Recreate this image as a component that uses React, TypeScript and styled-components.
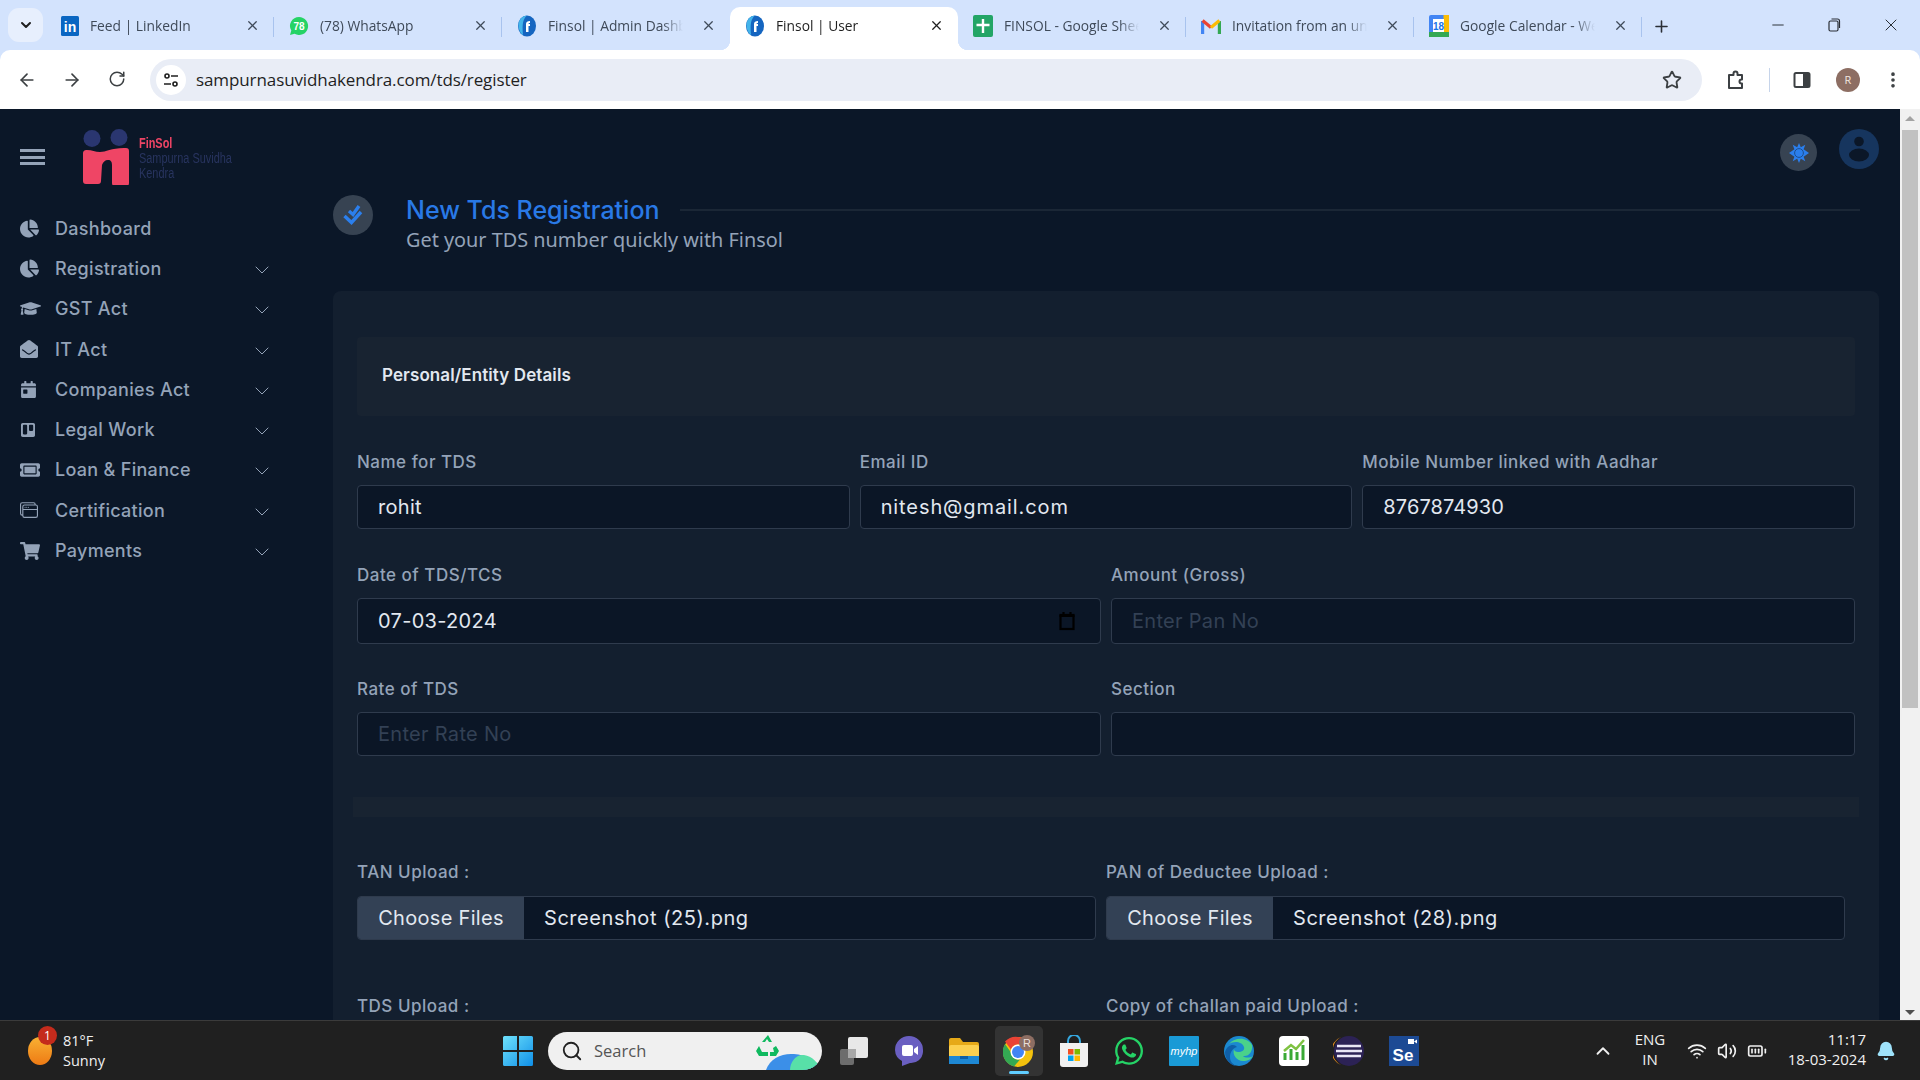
import * as React from 'react';
import styled, { createGlobalStyle } from 'styled-components';
import { ArrowLeft, ArrowRight, RotateCw, Star, X, Plus, Minus, ChevronDown, ChevronUp, MoreVertical, Search, Volume2, Wifi, BatteryFull, Bell } from 'lucide-react';
import { FaChartPie, FaGraduationCap, FaEnvelopeOpen, FaCalendarDay, FaTrello, FaTicketAlt, FaShoppingCart, FaWhatsapp } from 'react-icons/fa';
import { BsWindowStack } from 'react-icons/bs';

const uiFont = '"Inter", "Liberation Sans", sans-serif';
const chromeFont = '"Open Sans", "Noto Sans", sans-serif';

const GlobalStyle = createGlobalStyle`
  * { box-sizing: border-box; }
  html, body { margin: 0; height: 100%; overflow: hidden; }
  body { font-family: ${uiFont}; background: #0b1728; }
`;

const Screen = styled.div`
  width: 1920px;
  height: 1080px;
  display: flex;
  flex-direction: column;
  overflow: hidden;
  background: #d3e3fd;
`;

/* browser chrome */
const TabStrip = styled.div`
  height: 50px;
  flex: none;
  display: flex;
  align-items: flex-end;
  background: #d3e3fd;
  padding-left: 8px;
  font-family: ${chromeFont};
`;

const TabMenu = styled.div`
  width: 35px;
  height: 34px;
  margin: 0 3px 8px 0;
  border-radius: 11px;
  background: #e7effd;
  display: flex;
  align-items: center;
  justify-content: center;
  color: #1f1f1f;
`;

const Tab = styled.div<{ $active?: boolean; $sep?: boolean }>`
  position: relative;
  width: 228px;
  height: 43px;
  display: flex;
  align-items: center;
  padding: 0 14.500px 6px 15px;
  gap: 11px;
  border-radius: 10px 10px 0 0;
  background: ${p => (p.$active ? '#fff' : 'transparent')};
  color: ${p => (p.$active ? '#1f1f1f' : '#3f4a59')};

  &::after {
    content: '';
    display: ${p => (p.$sep ? 'block' : 'none')};
    position: absolute;
    right: 0;
    top: 10px;
    height: 20px;
    width: 1px;
    background: #a8c3ee;
  }

  ${p => p.$active && `
    &::before, &::after {
      content: '';
      display: block;
      position: absolute;
      top: auto;
      bottom: 0;
      width: 10px;
      height: 10px;
    }
    &::before {
      left: -10px;
      background: radial-gradient(circle at 0 0, transparent 10px, #fff 10.5px);
    }
    &::after {
      right: -10px;
      background: radial-gradient(circle at 100% 0, transparent 10px, #fff 10.5px);
    }
  `}
`;

const TabTitle = styled.span`
  flex: 1;
  margin-right: 7px;
  font-size: 13.8px;
  white-space: nowrap;
  overflow: hidden;
  -webkit-mask-image: linear-gradient(90deg, #000 85%, transparent);
  mask-image: linear-gradient(90deg, #000 85%, transparent);
`;

const NewTab = styled.div`
  width: 30px;
  height: 42px;
  margin-left: 4px;
  padding-bottom: 6px;
  display: flex;
  align-items: center;
  justify-content: center;
  color: #2a2f36;
`;

const WindowButtons = styled.div`
  margin-left: auto;
  height: 50px;
  display: flex;
  align-items: center;
  gap: 38px;
  padding: 0 19px 0 0;
  color: #2a2f36;
`;

const RestoreIcon = () => (
  <svg width="18" height="18" viewBox="0 0 18 18" fill="none" stroke="#2a2f36" strokeWidth="1.2">
    <rect x="4" y="5" width="9" height="10" rx="1.5" />
    <path d="M6.5 3h6a2 2 0 0 1 2 2v7" />
  </svg>
);

const Toolbar = styled.div`
  height: 59px;
  flex: none;
  display: flex;
  align-items: center;
  background: #fff;
  padding: 0 17px;
  color: #3c4043;
  border-radius: 10px 10px 0 0;
`;

const NavButtons = styled.div`
  display: flex;
  gap: 25px;
  width: 133px;
`;

const ReloadWrap = styled.span`
  margin-left: 1px;
  display: flex;
`;

const Omnibox = styled.div`
  width: 1552px;
  height: 42px;
  display: flex;
  align-items: center;
  border-radius: 21px;
  background: #e9edf6;
  padding: 0 20px 0 6px;
  font-family: ${chromeFont};
`;

const SiteInfo = styled.div`
  width: 30px;
  height: 30px;
  border-radius: 50%;
  background: #fff;
  display: flex;
  align-items: center;
  justify-content: center;
  margin-right: 10px;
`;

const Url = styled.span`
  flex: 1;
  font-size: 17px;
  letter-spacing: -0.1px;
  color: #1f1f1f;
`;

const ToolIcons = styled.div`
  flex: 1;
  display: flex;
  align-items: center;
  padding-left: 23px;
`;

const ToolSep = styled.div`
  width: 1px;
  height: 24px;
  background: #c6d4ea;
  margin: 0 22px 0 22px;
`;

const Avatar = styled.div`
  width: 24px;
  height: 24px;
  border-radius: 50%;
  background: #8d6e63;
  color: #f2e6e0;
  font-size: 11px;
  display: flex;
  align-items: center;
  justify-content: center;
  font-family: ${chromeFont};
  margin: 0 23px 0 24px;
`;

const SidePanelIcon = () => (
  <svg width="20" height="20" viewBox="0 0 20 20">
    <rect x="2.5" y="3" width="15" height="14" rx="1.5" fill="none" stroke="#3c4043" strokeWidth="2" />
    <rect x="11" y="3" width="6.5" height="14" fill="#3c4043" />
  </svg>
);

const ExtensionIcon = () => (
  <svg width="22" height="22" viewBox="0 0 22 22" fill="none" stroke="#3c4043" strokeWidth="2" strokeLinejoin="round">
    <path d="M4 6h4.500V4.500a2 2 0 0 1 4 0V6H17v4.500h-.5a2 2 0 0 0 0 4h.5V19H4z" />
  </svg>
);

/* page */
const Page = styled.div`
  flex: 1;
  min-height: 0;
  display: flex;
  background: #0b1728;
`;

const Sidebar = styled.aside`
  width: 300px;
  flex: none;
  padding: 20px 0 0 20px;
`;

const Brand = styled.div`
  height: 56px;
  display: flex;
  align-items: center;
  margin-bottom: 23px;
`;

const Burger = styled.div`
  width: 25px;
  height: 16px;
  margin-right: 38px;
  border-top: 3px solid #94a3b8;
  border-bottom: 3px solid #94a3b8;
  display: flex;
  align-items: center;

  &::before {
    content: '';
    display: block;
    width: 100%;
    height: 3px;
    background: #94a3b8;
  }
`;

const BrandText = styled.div`
  margin: 3px 0 0 10px;
  font-family: "Liberation Sans", sans-serif;
  font-size: 14px;
  line-height: 15px;
  color: #28345f;
  transform: scaleX(0.78);
  transform-origin: left;
  white-space: nowrap;

  b {
    display: block;
    color: #ef4565;
  }
`;

const NavItem = styled.div`
  height: 40.3px;
  display: flex;
  align-items: center;
  color: #94a3b8;
  font-size: 18px;
  font-weight: 500;
  letter-spacing: 0.3px;
`;

const NavIcon = styled.span`
  width: 35px;
  flex: none;
  display: flex;
  align-items: center;
`;

const NavLabel = styled.span`
  width: 195px;
`;

const NavChevron = styled(ChevronDown)`
  margin-top: 3px;
`;

const Main = styled.main`
  flex: 1;
  min-width: 0;
  padding: 20px 21px 0 33px;
  overflow: hidden;
`;

const TopActions = styled.div`
  height: 40px;
  display: flex;
  justify-content: flex-end;
  gap: 22px;
`;

const GearButton = styled.div`
  width: 37px;
  height: 37px;
  margin-top: 5px;
  border-radius: 50%;
  background: #374352;
  display: flex;
  align-items: center;
  justify-content: center;
`;

const UserButton = styled.div`
  width: 40px;
  height: 40px;
  border-radius: 50%;
  background: #16355e;
  display: flex;
  align-items: center;
  justify-content: center;
`;

const Heading = styled.div`
  display: flex;
  margin-top: 26px;
  gap: 33px;
  padding-right: 19px;
`;

const HeadingBadge = styled.div`
  width: 40px;
  height: 40px;
  flex: none;
  border-radius: 50%;
  background: #374352;
  display: flex;
  align-items: center;
  justify-content: center;
`;

const HeadingText = styled.div`
  flex: 1;
`;

const TitleRow = styled.div`
  height: 28px;
  padding-top: 1px;
  display: flex;
  align-items: center;
  gap: 20px;
`;

const Title = styled.h1`
  margin: 0;
  font-size: 25px;
  font-weight: 500;
  color: #2979e6;
  white-space: nowrap;
`;

const TitleLine = styled.div`
  flex: 1;
  height: 2px;
  background: #1b2736;
`;

const Subtitle = styled.div`
  margin-top: 2px;
  line-height: 30px;
  font-family: "Noto Sans", sans-serif;
  font-size: 19.85px;
  color: #94a3b8;
`;

const Card = styled.section`
  margin-top: 36px;
  padding: 46px 24px 40px;
  background: #131f2f;
  border-radius: 8px;
`;

const SectionBar = styled.div`
  height: 79px;
  padding: 0 0 3px 25px;
  display: flex;
  align-items: center;
  background: #182331;
  color: #e2e8f0;
  font-size: 17px;
  font-weight: 600;
  letter-spacing: 0.1px;
  border-radius: 4px;
`;

const Row = styled.div<{ $cols: number; $top: number }>`
  display: grid;
  grid-template-columns: repeat(${p => p.$cols}, 1fr);
  column-gap: 10px;
  margin-top: ${p => p.$top}px;
`;

const Field = styled.div``;

const Label = styled.label<{ $gap?: number }>`
  display: block;
  height: 22px;
  line-height: 22px;
  margin-bottom: ${p => p.$gap ?? 12}px;
  color: #94a3b8;
  font-size: 17px;
  font-weight: 500;
  letter-spacing: 0.5px;
`;

const Input = styled.input<{ $h: number; $track?: number }>`
  display: block;
  width: 100%;
  height: ${p => p.$h}px;
  padding: 0 20px;
  background: #0b1626;
  border: 1px solid #2f3b4d;
  border-radius: 4px;
  color: #e2e8f0;
  font-family: ${uiFont};
  font-size: 20px;
  letter-spacing: ${p => p.$track ?? 0.3}px;
  outline: none;

  &::placeholder {
    color: #334155;
  }
`;

const DateBox = styled.div`
  height: 46px;
  padding: 0 24px 0 20px;
  display: flex;
  align-items: center;
  justify-content: space-between;
  background: #0b1626;
  border: 1px solid #2f3b4d;
  border-radius: 4px;
  color: #e2e8f0;
  font-size: 20px;
  letter-spacing: 0.3px;
`;

const Divider = styled.div`
  height: 20px;
  margin: 41px -4px 0;
  background: #182331;
`;

const UploadRow = styled.div<{ $top: number }>`
  display: grid;
  grid-template-columns: 739px 739px;
  column-gap: 10px;
  margin-top: ${p => p.$top}px;
`;

const FileBox = styled.div`
  height: 44px;
  display: flex;
  align-items: center;
  background: #0b1626;
  border: 1px solid #2f3b4d;
  border-radius: 4px;
  overflow: hidden;
  color: #e2e8f0;
  font-size: 20px;
  letter-spacing: 0.55px;
`;

const FileButton = styled.div`
  width: 166px;
  height: 100%;
  flex: none;
  display: flex;
  align-items: center;
  justify-content: center;
  background: #334155;
  margin-right: 20px;
  letter-spacing: 0.3px;
`;

const Scrollbar = styled.div`
  width: 20px;
  flex: none;
  position: relative;
  background: #f1f1f1;
`;

const ScrollThumb = styled.div`
  margin: 21px 2px 0;
  height: 578px;
  background: #c1c1c1;
`;

const ScrollArrow = styled.div<{ $down?: boolean }>`
  position: absolute;
  left: 5px;
  ${p => (p.$down ? 'bottom: 5px;' : 'top: 7px;')}
  width: 0;
  height: 0;
  border-left: 5px solid transparent;
  border-right: 5px solid transparent;
  ${p => (p.$down ? 'border-top: 5px solid #505050;' : 'border-bottom: 5px solid #a3a3a3;')}
`;

/* taskbar */
const Taskbar = styled.footer`
  height: 60px;
  flex: none;
  position: relative;
  display: flex;
  align-items: center;
  background: #202020;
  border-top: 1px solid #3b3b3b;
  color: #f0f0f0;
  font-family: ${chromeFont};
`;

const Weather = styled.div`
  width: 503px;
  flex: none;
  display: flex;
  align-items: center;
  padding-left: 28px;
  gap: 11px;
  font-size: 14.5px;
  line-height: 20px;
`;

const SunBlob = styled.div`
  position: relative;
  width: 24px;
  height: 28px;
  border-radius: 50%;
  background: linear-gradient(180deg, #f8b133, #ee7a14);
`;

const Badge = styled.span`
  position: absolute;
  left: 10px;
  top: -11px;
  width: 19px;
  height: 19px;
  border-radius: 50%;
  background: #c42b1c;
  color: #fff;
  font-size: 12px;
  line-height: 19px;
  text-align: center;
`;

const SearchPill = styled.div`
  width: 274px;
  height: 38px;
  margin: 0 4px 0 15px;
  position: relative;
  overflow: hidden;
  display: flex;
  align-items: center;
  gap: 11px;
  padding-left: 13px;
  border-radius: 19px;
  background: #f0f0f0;
  color: #555;
  font-size: 16.5px;
`;

const PillArt = styled.svg`
  position: absolute;
  right: 0;
  top: 0;
`;

const Dock = styled.div`
  display: flex;
  align-items: center;
`;

const DockSlot = styled.div<{ $active?: boolean }>`
  width: 48px;
  height: 50px;
  margin: 0 3.500px;
  display: flex;
  align-items: center;
  justify-content: center;
  position: relative;
  border-radius: 5px;
  background: ${p => (p.$active ? '#333' : 'transparent')};

  &::after {
    content: '';
    display: ${p => (p.$active ? 'block' : 'none')};
    position: absolute;
    bottom: 2px;
    width: 20px;
    height: 3px;
    border-radius: 2px;
    background: #60cdff;
  }
`;

const Tray = styled.div`
  margin-left: auto;
  display: flex;
  align-items: center;
  padding-right: 24px;
`;

const Lang = styled.div`
  width: 38px;
  margin: 0 18px 4px 17px;
  text-align: center;
  font-size: 15px;
  line-height: 20px;
`;

const TrayIcons = styled.div`
  display: flex;
  align-items: center;
  gap: 10px;
`;

const Clock = styled.div`
  width: 82px;
  margin: 0 10px 4px 17px;
  text-align: right;
  font-size: 15px;
  line-height: 20px;
  white-space: nowrap;
`;

/* favicons and other small drawings */
const LinkedInIcon = () => (
  <svg width="18" height="20" viewBox="0 0 18 20">
    <rect width="18" height="20" y="0" rx="1.5" fill="#0a66c2" />
    <text x="9" y="15.5" textAnchor="middle" fontFamily="Liberation Sans" fontWeight="700" fontSize="14" fill="#fff">in</text>
  </svg>
);

const WhatsAppFav = () => (
  <svg width="20" height="20" viewBox="0 0 20 20">
    <path d="M10 1a9 9 0 0 0-7.7 13.6L1 19l4.6-1.2A9 9 0 1 0 10 1z" fill="#25d366" />
    <text x="10" y="13.5" textAnchor="middle" fontFamily="Liberation Sans" fontWeight="700" fontSize="10" fill="#fff">78</text>
  </svg>
);

const FinsolFav = () => (
  <svg width="20" height="22" viewBox="0 0 20 22">
    <ellipse cx="10" cy="11" rx="9" ry="10.5" fill="#1565c0" />
    <path d="M2 14C0 7 4 1 10 .6 6 4 5 9 6 20 4 19 3 17 2 14z" fill="#43b4ea" />
    <path d="M9 17V9c0-2 1.500-3 4-3v2c-1 0-1.500.3-1.500 1H13v2h-1.500v6z" fill="#fff" />
  </svg>
);

const SheetsFav = () => (
  <svg width="20" height="22" viewBox="0 0 20 22">
    <rect width="20" height="22" rx="2" fill="#23a566" />
    <path d="M10 4v14M3.500 10h13" stroke="#fff" strokeWidth="2.4" />
  </svg>
);

const GmailFav = () => (
  <svg width="20" height="16" viewBox="0 0 20 16" fill="none" strokeWidth="3.200">
    <path d="M1.600 16V3" stroke="#4285f4" />
    <path d="M18.400 16V3" stroke="#34a853" />
    <path d="M1.600 2.500 10 9.500" stroke="#ea4335" />
    <path d="M10 9.500 18.400 2.500" stroke="#fbbc04" />
  </svg>
);

const CalendarFav = () => (
  <svg width="20" height="22" viewBox="0 0 20 22">
    <rect width="20" height="22" rx="2" fill="#4285f4" />
    <rect x="14.500" width="5.500" height="22" fill="#fbbc04" />
    <rect y="17" width="20" height="5" fill="#34a853" />
    <rect x="4" y="4" width="11" height="13" fill="#fff" />
    <text x="9.500" y="15" textAnchor="middle" fontFamily="Liberation Sans" fontWeight="700" fontSize="10" fill="#1a73e8">18</text>
  </svg>
);

const tabs = [
  { title: 'Feed | LinkedIn', icon: <LinkedInIcon />, sep: true },
  { title: '(78) WhatsApp', icon: <WhatsAppFav />, sep: true },
  { title: 'Finsol | Admin Dashboard', icon: <FinsolFav /> },
  { title: 'Finsol | User', icon: <FinsolFav />, active: true },
  { title: 'FINSOL - Google Sheets', icon: <SheetsFav />, sep: true },
  { title: 'Invitation from an unknown', icon: <GmailFav />, sep: true },
  { title: 'Google Calendar - Week', icon: <CalendarFav />, sep: true },
];

const navItems = [
  { label: 'Dashboard', icon: <FaChartPie size={19} />, chevron: false },
  { label: 'Registration', icon: <FaChartPie size={19} />, chevron: true },
  { label: 'GST Act', icon: <FaGraduationCap size={21} />, chevron: true },
  { label: 'IT Act', icon: <FaEnvelopeOpen size={18} />, chevron: true },
  { label: 'Companies Act', icon: <FaCalendarDay size={17} />, chevron: true },
  { label: 'Legal Work', icon: <FaTrello size={16} />, chevron: true },
  { label: 'Loan & Finance', icon: <FaTicketAlt size={20} />, chevron: true },
  { label: 'Certification', icon: <BsWindowStack size={18} />, chevron: true },
  { label: 'Payments', icon: <FaShoppingCart size={20} />, chevron: true },
];

const BrandLogo = () => (
  <svg width="46" height="56" viewBox="0 0 46 56">
    <circle cx="9" cy="9.500" r="8.500" fill="#2a3670" />
    <circle cx="36" cy="8.500" r="8.500" fill="#2a3670" />
    <path d="M0 25c0-3 1-4 4-4 5 0 8 2 13 2 6 0 11-4 24-4h2c2 0 3 1 3 3v32c0 2-1 3-3 3H32c-2 0-3-1-3-3V36c0-3-1-5-4-5s-5 2-6 5l-1 16c0 2-1 3-3 3H3c-2 0-3-1-3-3z" fill="#ef4565" />
  </svg>
);

const SunIcon = () => (
  <svg width="20" height="20" viewBox="0 0 20 20">
    <path d="M10 0l1.800 4.200 4.500-2.500-1.700 4.500L20 10l-5.400 3.800 1.700 4.500-4.500-2.500L10 20l-1.800-4.200-4.500 2.500 1.700-4.500L0 10l5.400-3.800-1.700-4.500 4.500 2.500z" fill="#2b7fed" />
    <circle cx="10" cy="10" r="4.400" fill="#2b7fed" stroke="#1c4f92" strokeWidth="1" />
  </svg>
);

const UserIcon = () => (
  <svg width="40" height="40" viewBox="0 0 40 40" fill="#0b1728">
    <circle cx="20" cy="12.500" r="4.800" />
    <ellipse cx="20" cy="26" rx="10" ry="6.500" />
  </svg>
);

const DoubleCheck = () => (
  <svg width="20" height="22" viewBox="0 0 20 22" fill="none" stroke="#2b7fed" strokeWidth="3.400">
    <path d="M6 7l4 3.500L16 2" />
    <path d="M1.500 12l7 6.500L18 8" />
  </svg>
);

const DateIcon = () => (
  <svg width="18" height="20" viewBox="0 0 18 20" fill="none" stroke="#000" strokeWidth="2.200">
    <rect x="2.500" y="4" width="13" height="14" />
    <path d="M1.500 5h15M5.500 1v3M12.500 1v3" />
  </svg>
);

const WindowsLogo = () => (
  <svg width="30" height="30" viewBox="0 0 30 30">
    <defs>
      <linearGradient id="winGrad" x1="0" y1="0" x2="1" y2="1">
        <stop offset="0" stopColor="#6fe2fb" />
        <stop offset="1" stopColor="#0f8fe8" />
      </linearGradient>
    </defs>
    <path d="M0 1.500A1.500 1.500 0 0 1 1.500 0H14v14H0zM16 0h12.500A1.500 1.500 0 0 1 30 1.500V14H16zM0 16h14v14H1.500A1.500 1.500 0 0 1 0 28.500zM16 16h14v12.500a1.500 1.500 0 0 1-1.500 1.500H16z" fill="url(#winGrad)" />
  </svg>
);

const dockIcons = [
  <svg width="30" height="30" viewBox="0 0 30 30"><rect x="9" y="1" width="20" height="21" rx="2" fill="#e8e8e8" /><rect x="1" y="13" width="14" height="16" rx="2" fill="#6d6d6d" /><rect x="9" y="13" width="8" height="9" fill="#a9a9a9" /></svg>,
  <svg width="30" height="32" viewBox="0 0 30 32"><path d="M15 1a14 14 0 0 1 14 14v2a12 12 0 0 1-13 11l-8 3v-5A13 13 0 0 1 1 15 14 14 0 0 1 15 1z" fill="#6a5fc1" /><rect x="8" y="10" width="11" height="11" rx="2" fill="#fff" /><path d="M20 14l4-3v9l-4-3z" fill="#fff" /></svg>,
  <svg width="32" height="28" viewBox="0 0 32 28"><path d="M1 3a2 2 0 0 1 2-2h9l3 4h14a2 2 0 0 1 2 2v4H1z" fill="#e6a918" /><rect x="1" y="8" width="30" height="19" rx="2" fill="#fcd04f" /><rect x="1" y="19" width="30" height="8" fill="#1e88d4" /><rect x="12" y="19" width="8" height="3" fill="#0f5fa5" /></svg>,
  <svg width="32" height="32" viewBox="0 0 32 32"><circle cx="15" cy="17" r="15" fill="#f4c20d" /><path d="M15 2a15 15 0 0 1 13 7.500H15a7.500 7.500 0 0 0-7 5L2 6.500A15 15 0 0 1 15 2z" fill="#ea4335" /><path d="M2 9a15 15 0 0 0 9 22.500l6-7a7.500 7.500 0 0 1-9-7z" fill="#34a853" /><circle cx="15" cy="17" r="7.500" fill="#fff" /><circle cx="15" cy="17" r="6" fill="#4285f4" /><circle cx="24" cy="8" r="8" fill="#8d6e63" /><text x="24" y="12" textAnchor="middle" fontFamily="Liberation Sans" fontSize="11" fill="#eadfd9">R</text></svg>,
  <svg width="30" height="32" viewBox="0 0 30 32"><path d="M9 9V6a6 6 0 0 1 12 0v3" fill="none" stroke="#35a8e0" strokeWidth="2" /><path d="M1 8h28v21a3 3 0 0 1-3 3H4a3 3 0 0 1-3-3z" fill="#f1f1f1" /><rect x="9" y="14" width="5.500" height="5.500" fill="#f25022" /><rect x="15.500" y="14" width="5.500" height="5.500" fill="#7fba00" /><rect x="9" y="20.500" width="5.500" height="5.500" fill="#00a4ef" /><rect x="15.500" y="20.500" width="5.500" height="5.500" fill="#ffb900" /></svg>,
  <FaWhatsapp size={32} color="#25d366" />,
  <svg width="30" height="30" viewBox="0 0 30 30"><rect width="30" height="30" rx="1" fill="#1a9ad6" /><text x="15" y="19" textAnchor="middle" fontFamily="Liberation Sans" fontStyle="italic" fontSize="11" fill="#fff">myhp</text></svg>,
  <svg width="30" height="30" viewBox="0 0 30 30"><circle cx="15" cy="15" r="15" fill="#1b88d0" /><path d="M28 9C24 2 12 0 5 8c4-3 13-3 15 3 1 3-2 5-6 5-2 0-4-1-4-3-2 6 3 12 9 12 5 0 8-2 10-5-3 2-8 2-10 0 6 1 10-5 9-11z" fill="#4ad28a" /><path d="M13 11c-4 1-7 5-7 10s3 7 6 9c-6-1-11-7-11-14C3 9 10 7 13 11z" fill="#0f5fa8" /></svg>,
  <svg width="30" height="30" viewBox="0 0 30 30"><rect width="30" height="30" rx="4" fill="#fff" /><path d="M6 24v-7M12 24V13M18 24v-8M24 24V9" stroke="#3aa935" strokeWidth="3" /><path d="M5 15l7-6 5 4 8-9" fill="none" stroke="#7fc241" strokeWidth="2.500" /></svg>,
  <svg width="32" height="32" viewBox="0 0 32 32"><circle cx="16" cy="16" r="15" fill="#2c2255" /><path d="M8 2a15 15 0 0 0 0 28A16 16 0 0 1 8 2z" fill="#f7941e" /><path d="M4 11h24M3 16h26M4 21h24" stroke="#e9e6f4" strokeWidth="2.500" /></svg>,
  <svg width="30" height="30" viewBox="0 0 30 30"><rect width="30" height="30" fill="#1c4a94" /><rect x="19" y="3" width="6" height="5" fill="#fff" /><path d="M25 5.500l3-2v4z" fill="#fff" /><text x="14" y="25" textAnchor="middle" fontFamily="Liberation Sans" fontWeight="700" fontSize="17" fill="#fff">Se</text></svg>,
];

const App: React.FC = () => (
  <Screen>
    <GlobalStyle />
    <TabStrip>
      <TabMenu><ChevronDown size={16} strokeWidth={3} /></TabMenu>
      {tabs.map(tab => (
        <Tab key={tab.title} $active={tab.active} $sep={tab.sep}>
          {tab.icon}
          <TabTitle>{tab.title}</TabTitle>
          <X size={15} strokeWidth={2} />
        </Tab>
      ))}
      <NewTab><Plus size={19} strokeWidth={2} /></NewTab>
      <WindowButtons>
        <Minus size={18} strokeWidth={1.3} />
        <RestoreIcon />
        <X size={20} strokeWidth={1.2} />
      </WindowButtons>
    </TabStrip>
    <Toolbar>
      <NavButtons>
        <ArrowLeft size={20} />
        <ArrowRight size={20} />
        <ReloadWrap><RotateCw size={18} /></ReloadWrap>
      </NavButtons>
      <Omnibox>
        <SiteInfo>
          <svg width="18" height="18" viewBox="0 0 18 18" fill="none" stroke="#1f1f1f" strokeWidth="1.600">
            <circle cx="5" cy="5" r="2" /><path d="M9 5h7M2 13h7" /><circle cx="13" cy="13" r="2" />
          </svg>
        </SiteInfo>
        <Url>sampurnasuvidhakendra.com/tds/register</Url>
        <Star size={20} color="#3c4043" strokeWidth={2.200} />
      </Omnibox>
      <ToolIcons>
        <ExtensionIcon />
        <ToolSep />
        <SidePanelIcon />
        <Avatar>R</Avatar>
        <MoreVertical size={20} strokeWidth={2.400} />
      </ToolIcons>
    </Toolbar>

    <Page>
      <Sidebar>
        <Brand>
          <Burger />
          <BrandLogo />
          <BrandText>
            <b>FinSol</b>
            Sampurna Suvidha<br />Kendra
          </BrandText>
        </Brand>
        {navItems.map(item => (
          <NavItem key={item.label}>
            <NavIcon>{item.icon}</NavIcon>
            <NavLabel>{item.label}</NavLabel>
            {item.chevron && <NavChevron size={24} strokeWidth={1} />}
          </NavItem>
        ))}
      </Sidebar>

      <Main>
        <TopActions>
          <GearButton><SunIcon /></GearButton>
          <UserButton><UserIcon /></UserButton>
        </TopActions>
        <Heading>
          <HeadingBadge><DoubleCheck /></HeadingBadge>
          <HeadingText>
            <TitleRow>
              <Title>New Tds Registration</Title>
              <TitleLine />
            </TitleRow>
            <Subtitle>Get your TDS number quickly with Finsol</Subtitle>
          </HeadingText>
        </Heading>

        <Card>
          <SectionBar>Personal/Entity Details</SectionBar>
          <Row $cols={3} $top={35}>
            <Field>
              <Label>Name for TDS</Label>
              <Input $h={44} readOnly value="rohit" />
            </Field>
            <Field>
              <Label>Email ID</Label>
              <Input $h={44} $track={0.9} readOnly value="nitesh@gmail.com" />
            </Field>
            <Field>
              <Label>Mobile Number linked with Aadhar</Label>
              <Input $h={44} $track={0.1} readOnly value="8767874930" />
            </Field>
          </Row>
          <Row $cols={2} $top={35}>
            <Field>
              <Label>Date of TDS/TCS</Label>
              <DateBox>07-03-2024<DateIcon /></DateBox>
            </Field>
            <Field>
              <Label>Amount (Gross)</Label>
              <Input $h={46} readOnly placeholder="Enter Pan No" />
            </Field>
          </Row>
          <Row $cols={2} $top={34}>
            <Field>
              <Label>Rate of TDS</Label>
              <Input $h={44} readOnly placeholder="Enter Rate No" />
            </Field>
            <Field>
              <Label>Section</Label>
              <Input $h={44} readOnly />
            </Field>
          </Row>
          <Divider />
          <UploadRow $top={44}>
            <Field>
              <Label $gap={13}>TAN Upload :</Label>
              <FileBox><FileButton>Choose Files</FileButton>Screenshot (25).png</FileBox>
            </Field>
            <Field>
              <Label $gap={13}>PAN of Deductee Upload :</Label>
              <FileBox><FileButton>Choose Files</FileButton>Screenshot (28).png</FileBox>
            </Field>
          </UploadRow>
          <UploadRow $top={55}>
            <Field>
              <Label>TDS Upload :</Label>
              <FileBox><FileButton>Choose Files</FileButton>No file chosen</FileBox>
            </Field>
            <Field>
              <Label>Copy of challan paid Upload :</Label>
              <FileBox><FileButton>Choose Files</FileButton>No file chosen</FileBox>
            </Field>
          </UploadRow>
        </Card>
      </Main>

      <Scrollbar>
        <ScrollArrow />
        <ScrollThumb />
        <ScrollArrow $down />
      </Scrollbar>
    </Page>

    <Taskbar>
      <Weather>
        <SunBlob><Badge>1</Badge></SunBlob>
        <div>81°F<br />Sunny</div>
      </Weather>
      <WindowsLogo />
      <SearchPill>
        <Search size={22} color="#222" strokeWidth={2} />
        Search
        <PillArt width="70" height="38" viewBox="0 0 70 38">
          <path d="M16 3l4 7h-3l-2-3-2 3-3 0zM7 14l3 6h6v4H7l-3-5zM24 14l3 5-3 5h-6v-4h4l-1-4z" fill="#10b95f" />
          <path d="M14 38c4-12 16-17 28-16 12 1 22 6 28 16z" fill="#3b8fe8" />
          <path d="M38 38c0-8 6-16 14-15 8 1 14 8 18 15z" fill="#58e0a8" />
        </PillArt>
      </SearchPill>
      <Dock>
        {dockIcons.map((icon, i) => (
          <DockSlot key={i} $active={i === 3}>{icon}</DockSlot>
        ))}
      </Dock>
      <Tray>
        <ChevronUp size={22} strokeWidth={2} />
        <Lang>ENG<br />IN</Lang>
        <TrayIcons>
          <Wifi size={20} />
          <Volume2 size={20} />
          <BatteryFull size={20} />
        </TrayIcons>
        <Clock>11:17<br />18-03-2024</Clock>
        <Bell size={20} color="#9fe3fb" fill="#9fe3fb" />
      </Tray>
    </Taskbar>
  </Screen>
);

export default App;
